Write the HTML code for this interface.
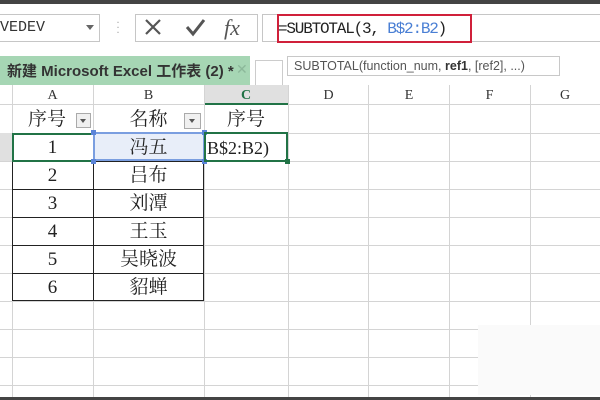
<!DOCTYPE html>
<html><head><meta charset="utf-8"><style>
*{margin:0;padding:0;box-sizing:border-box}
body{width:600px;height:400px;overflow:hidden;background:#fff;position:relative;font-family:"Liberation Serif","Noto Serif CJK SC",serif;}
.a{position:absolute}
.vl{position:absolute;width:1px;background:#d4d4d4}
.hl{position:absolute;height:1px;background:#d4d4d4}
.ch{position:absolute;top:86px;height:19px;font-size:14px;text-align:center;color:#333;line-height:19px}
.c{position:absolute;font-size:19px;text-align:center;color:#222;height:28px;line-height:30px;font-family:"Liberation Serif","Noto Serif CJK SC",serif}
</style></head><body>
<div class="a" style="left:0;top:0;width:600px;height:4px;background:#444"></div>
<div class="a" style="left:0;top:14px;width:100px;height:28px;border:1px solid #c6c6c6;border-left:none;font-size:15px;line-height:26px;color:#333;font-family:'Liberation Mono',monospace">VEDEV</div>
<div class="a" style="left:86px;top:25px;width:0;height:0;border-left:4px solid transparent;border-right:4px solid transparent;border-top:5px solid #666"></div>
<div class="a" style="left:116px;top:20px;color:#aaa;font-size:12px;line-height:5px">·<br>·<br>·</div>
<div class="a" style="left:135px;top:14px;width:123px;height:28px;border:1px solid #c6c6c6"></div>
<svg class="a" style="left:140px;top:15px" width="115" height="26"><path d="M6 5 L20 19 M20 5 L6 19" stroke="#555" stroke-width="2.2" fill="none"/><path d="M47 12 L53 19 L64 5" stroke="#555" stroke-width="3" fill="none"/><text x="84" y="20" font-family="Liberation Serif" font-style="italic" font-size="22" fill="#555">fx</text></svg>
<div class="a" style="left:262px;top:14px;width:338px;height:28px;border:1px solid #c6c6c6;border-right:none"></div>
<div class="a" style="left:277px;top:14px;width:195px;height:29px;border:2px solid #d0203a"></div>
<div class="a" style="left:278px;top:17px;font-size:16px;line-height:24px;font-family:'Liberation Mono','Noto Sans CJK SC',monospace;color:#222;letter-spacing:-1.2px">=SUBTOTAL(3, <span style="color:#4a7fd4">B$2:B2</span>)</div>
<div class="a" style="left:0;top:56px;width:250px;height:29px;background:#a6d6b4"></div>
<div class="a" style="left:0;top:60px;font-size:15px;font-weight:bold;color:#333;font-family:'Liberation Sans','Noto Sans CJK SC',sans-serif;line-height:24px;padding-left:7px">新建 Microsoft Excel 工作表 (2) *</div>
<div class="a" style="left:236px;top:61px;font-size:14px;color:#8cb89a;font-family:'Liberation Sans',sans-serif">✕</div>
<div class="a" style="left:255px;top:60px;width:28px;height:25px;border:1px solid #ccc;border-bottom:none"></div>
<div class="a" style="left:287px;top:56px;width:273px;height:20px;border:1px solid #c8c8c8;background:#fff;font-size:12.5px;line-height:18px;padding-left:6px;color:#555;font-family:'Liberation Sans',sans-serif">SUBTOTAL(function_num, <b style="color:#333">ref1</b>, [ref2], ...)</div>
<div class="a" style="left:0;top:85px;width:600px;height:20px;background:#fff;border-bottom:1px solid #d4d4d4"></div>
<div class="a" style="left:204px;top:85px;width:84px;height:20px;background:#e0e0e0;border-bottom:2px solid #217346"></div>
<div class="ch" style="left:12px;width:81px">A</div>
<div class="ch" style="left:93px;width:111px">B</div>
<div class="ch" style="left:204px;width:84px;color:#217346;font-weight:bold">C</div>
<div class="ch" style="left:288px;width:81px">D</div>
<div class="ch" style="left:369px;width:80px">E</div>
<div class="ch" style="left:449px;width:81px">F</div>
<div class="ch" style="left:530px;width:70px">G</div>
<div class="vl" style="left:12px;top:85px;height:312px"></div>
<div class="vl" style="left:93px;top:85px;height:312px"></div>
<div class="vl" style="left:204px;top:85px;height:312px"></div>
<div class="vl" style="left:288px;top:85px;height:312px"></div>
<div class="vl" style="left:368px;top:85px;height:312px"></div>
<div class="vl" style="left:449px;top:85px;height:312px"></div>
<div class="vl" style="left:530px;top:85px;height:312px"></div>
<div class="hl" style="left:0;top:133px;width:600px"></div>
<div class="hl" style="left:0;top:161px;width:600px"></div>
<div class="hl" style="left:0;top:189px;width:600px"></div>
<div class="hl" style="left:0;top:217px;width:600px"></div>
<div class="hl" style="left:0;top:245px;width:600px"></div>
<div class="hl" style="left:0;top:273px;width:600px"></div>
<div class="hl" style="left:0;top:301px;width:600px"></div>
<div class="hl" style="left:0;top:329px;width:600px"></div>
<div class="hl" style="left:0;top:357px;width:600px"></div>
<div class="hl" style="left:0;top:385px;width:600px"></div>
<div class="a" style="left:0;top:133px;width:12px;height:28px;background:#e0e0e0"></div>
<div class="a" style="left:12px;top:133px;width:192px;height:168px;border:1px solid #222;border-top:none"></div>
<div class="a" style="left:93px;top:133px;width:1px;height:168px;background:#222"></div>
<div class="a" style="left:12px;top:161px;width:192px;height:1px;background:#222"></div>
<div class="a" style="left:12px;top:189px;width:192px;height:1px;background:#222"></div>
<div class="a" style="left:12px;top:217px;width:192px;height:1px;background:#222"></div>
<div class="a" style="left:12px;top:245px;width:192px;height:1px;background:#222"></div>
<div class="a" style="left:12px;top:273px;width:192px;height:1px;background:#222"></div>
<div class="a" style="left:12px;top:133px;width:82px;height:29px;border:2px solid #217346;border-right:none"></div>
<div class="a" style="left:93px;top:132px;width:112px;height:29px;background:#e8eef9;border:2px solid #7a9ee0"></div>
<div class="a" style="left:91px;top:130px;width:5px;height:5px;background:#5b84d8"></div>
<div class="a" style="left:202px;top:130px;width:5px;height:5px;background:#5b84d8"></div>
<div class="a" style="left:91px;top:159px;width:5px;height:5px;background:#5b84d8"></div>
<div class="a" style="left:202px;top:159px;width:5px;height:5px;background:#5b84d8"></div>
<div class="a" style="left:204px;top:132px;width:84px;height:30px;border:2px solid #217346"></div>
<div class="a" style="left:285px;top:159px;width:5px;height:5px;background:#217346"></div>
<div class="a" style="left:76px;top:113px;width:15px;height:15px;border:1px solid #aaa;background:#f0f0f0"></div>
<div class="a" style="left:80px;top:119px;border-left:3.5px solid transparent;border-right:3.5px solid transparent;border-top:4px solid #555"></div>
<div class="a" style="left:184px;top:113px;width:17px;height:16px;border:1px solid #aaa;background:#f0f0f0"></div>
<div class="a" style="left:189px;top:119px;border-left:3.5px solid transparent;border-right:3.5px solid transparent;border-top:4px solid #555"></div>
<div class="c" style="left:12px;top:105px;width:70px">序号</div>
<div class="c" style="left:93px;top:105px;width:111px">名称</div>
<div class="c" style="left:204px;top:105px;width:84px">序号</div>
<div class="c" style="left:12px;top:133px;width:81px">1</div>
<div class="c" style="left:93px;top:133px;width:111px">冯五</div>
<div class="c" style="left:207px;top:133px;width:84px;text-align:left;font-size:18px">B$2:B2)</div>
<div class="c" style="left:12px;top:161px;width:81px">2</div>
<div class="c" style="left:93px;top:161px;width:111px">吕布</div>
<div class="c" style="left:12px;top:189px;width:81px">3</div>
<div class="c" style="left:93px;top:189px;width:111px">刘潭</div>
<div class="c" style="left:12px;top:217px;width:81px">4</div>
<div class="c" style="left:93px;top:217px;width:111px">王玉</div>
<div class="c" style="left:12px;top:245px;width:81px">5</div>
<div class="c" style="left:93px;top:245px;width:111px">吴晓波</div>
<div class="c" style="left:12px;top:273px;width:81px">6</div>
<div class="c" style="left:93px;top:273px;width:111px">貂蝉</div>
<div class="a" style="left:478px;top:325px;width:122px;height:70px;background:#fafafa"></div>
<div class="a" style="left:0;top:397px;width:600px;height:3px;background:#444"></div>
</body></html>
